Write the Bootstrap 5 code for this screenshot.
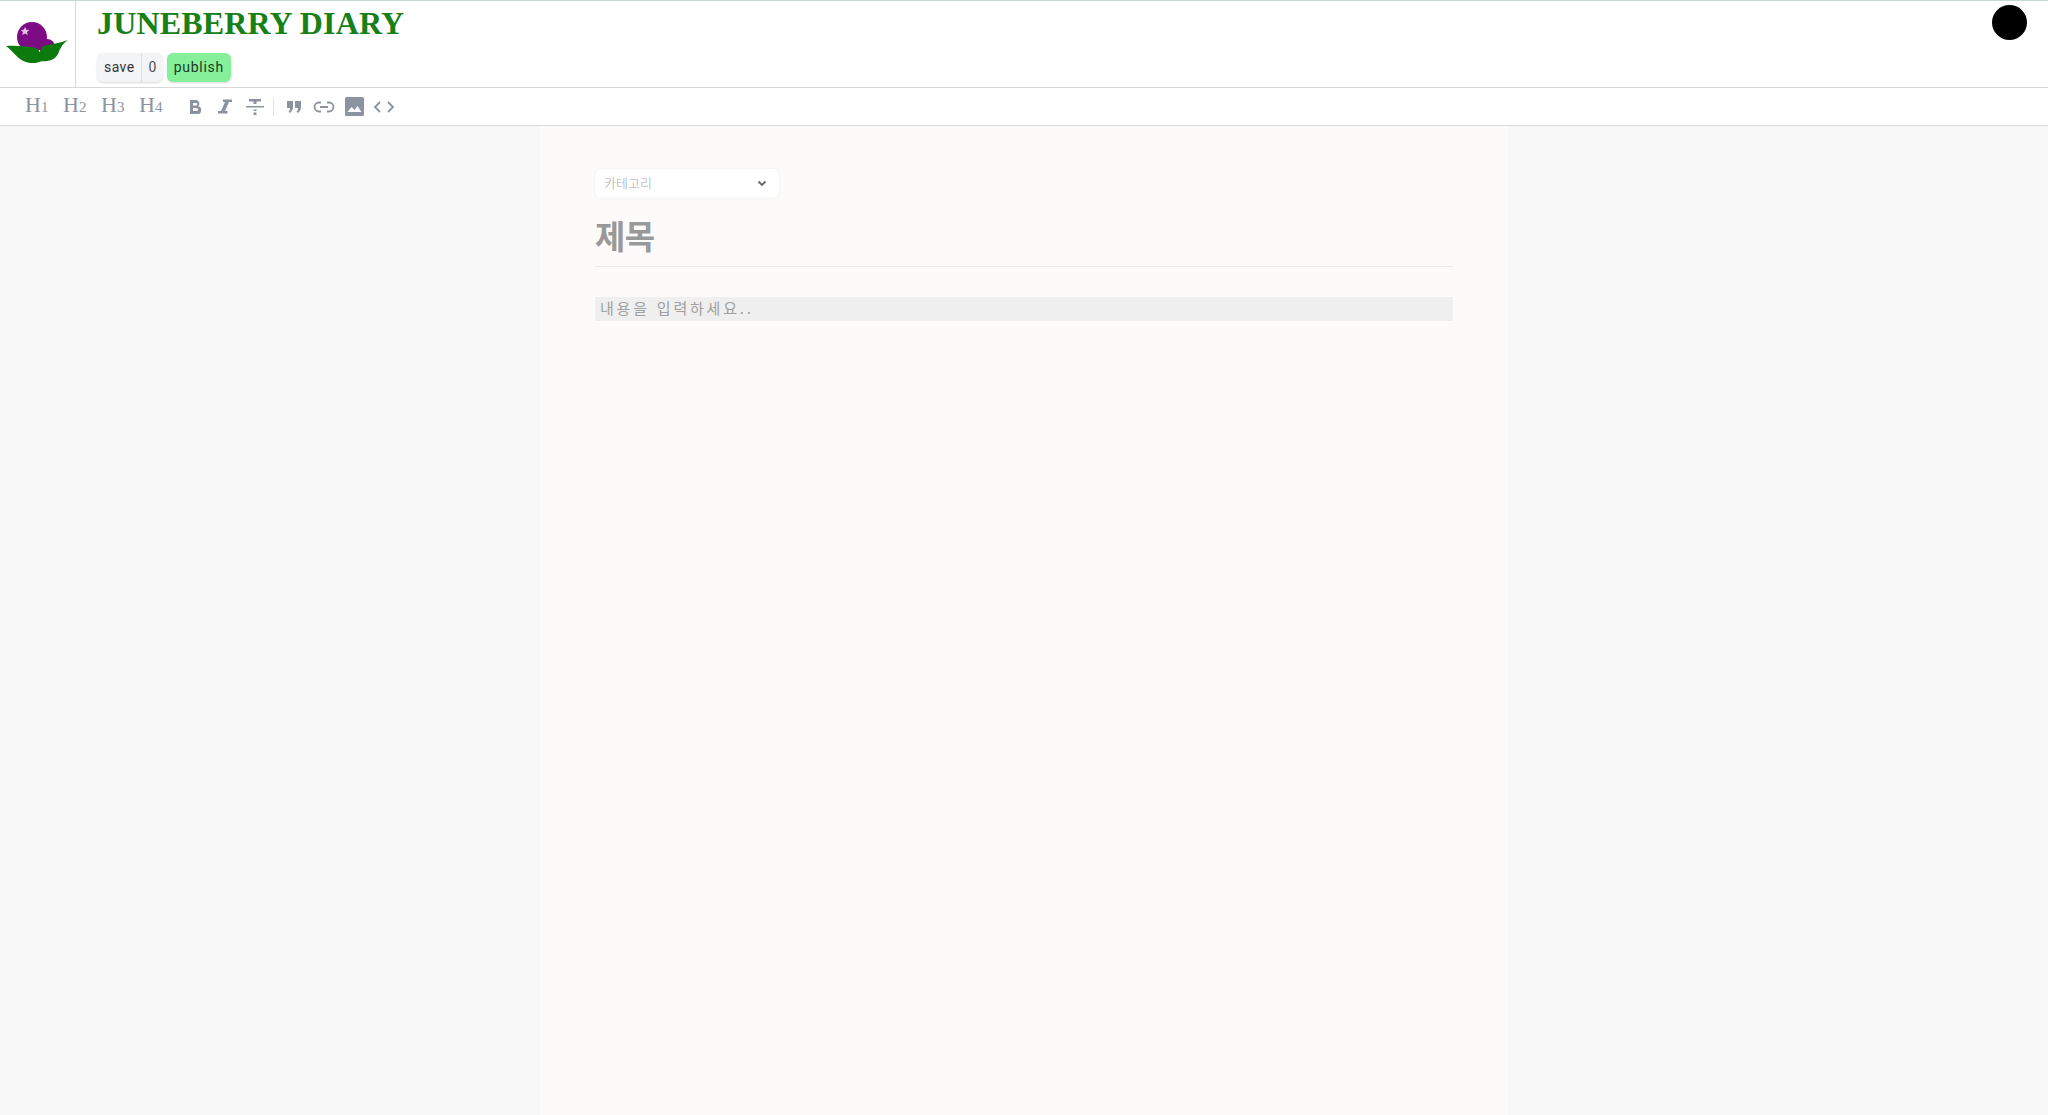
<!DOCTYPE html>
<html lang="ko">
<head>
<meta charset="utf-8">
<title>Juneberry Diary</title>
<link href="https://cdn.jsdelivr.net/npm/bootstrap@5.3.0/dist/css/bootstrap.min.css" rel="stylesheet">
<style>
html,body{height:100%}
body{background:#f8f8f8;font-family:Roboto,"Noto Sans CJK KR",sans-serif;display:flex;flex-direction:column;height:1115px;overflow:hidden}
.topbar{background:#fff;height:88px;border-top:1px solid #c5d9d3;border-bottom:1px solid #d6d9d8;flex:none}
.logo-cell{width:76px;border-right:1px solid #d5d9d8;padding-bottom:6px}
.brand-title{font-family:"Liberation Serif",serif;font-weight:700;font-size:32px;line-height:40px;color:#178017;margin:2px 0 0;letter-spacing:.15px}
.head-main{padding-left:21px}
.act-group{margin-top:10px;gap:4px}
.act-pair{display:flex;background:#f3f4f6;border-radius:6px;box-shadow:0 1px 2px rgba(0,0,0,.15);height:29px;font-size:14px;letter-spacing:.4px;color:#333;line-height:29px}
.act-pair span{padding:0 7px}
.act-pair span+span{border-left:1px solid #dfe0e2;padding:0 6px;color:#555}
.act-pub{background:#86ef9a;border-radius:6px;box-shadow:0 1px 2px rgba(0,0,0,.15);height:29px;line-height:29px;font-size:14px;letter-spacing:.7px;padding:0 7px;color:#1c3a26;border:0}
.avatar-dot{width:35px;height:35px;background:#000;border-radius:50%;margin:4px 21px 0 0}
.toolbar{height:38px;background:#fff;border-bottom:1px solid #d6d9d8;flex:none;padding-left:25px;color:#8b93a1}
.hd-tool{font-family:"Liberation Serif",serif;font-size:22px;line-height:1;width:38px;color:#8b93a1;font-weight:400;padding-bottom:4px}
.hd-tool sub{font-size:15px;vertical-align:baseline;bottom:0}
.tool-ico{width:30px;display:flex;justify-content:center;align-items:center}
.tool-sep{width:1px;height:18px;background:#dfe1e4;margin:0 5px 0 3px}
.tool-row{margin-left:3px}
.sheet-wrap{flex:1;min-height:0}
.sheet{width:968px;background:#fcfbfa;margin:0 auto;padding:43px 55px 0;height:100%}
.cat-select{width:184px;height:29px;background:#fff;border-radius:6px;box-shadow:0 0 3px rgba(0,0,0,.08);font-size:13px;font-weight:300;color:#aaa;padding:0 9px 0 9px;display:flex;align-items:center;justify-content:space-between}
.cat-select svg{margin-right:3px}
.title-ph{font-size:33px;font-weight:700;color:#999;line-height:44px;margin-top:15px;padding-bottom:9px;border-bottom:1px solid #ebebeb;font-family:"Noto Sans CJK KR",sans-serif;letter-spacing:-.5px}
.body-ph{margin-top:30px;background:#efefef;height:24px;line-height:22px;font-size:15px;color:#a0a0a0;padding-left:5px;letter-spacing:2.8px;font-family:"Noto Sans CJK KR",monospace}
</style>
</head>
<body>
<header class="topbar d-flex">
  <div class="logo-cell d-flex align-items-center justify-content-center">
    <svg width="66" height="50" viewBox="0 0 66 50">
      <circle cx="42" cy="31" r="8" fill="#7d0b83"/>
      <circle cx="27" cy="21" r="15" fill="#7d0b83"/>
      <path d="M20 11l1.300 2.800 3 .3-2.300 2 .7 3-2.700-1.600-2.700 1.600.7-3-2.300-2 3-.3z" fill="#e6bfe8"/>
      <path d="M1 30c9-.5 21 0 30 2 4 2 6 8 6 13-4 2-11 3-16 1C12 43 8 35 1 30z" fill="#0d7a0d"/>
      <path d="M63 24c-8 3-17 4-25 6-3 3-4 9-3 15 8 1 15-1 18-7 2-5 4-10 10-14z" fill="#0d7a0d"/>
    </svg>
  </div>
  <div class="head-main flex-grow-1">
    <h1 class="brand-title">JUNEBERRY DIARY</h1>
    <div class="d-flex act-group">
      <div class="act-pair"><span>save</span><span>0</span></div>
      <button class="act-pub" type="button">publish</button>
    </div>
  </div>
  <div class="avatar-dot"></div>
</header>
<nav class="toolbar d-flex align-items-center">
  <div class="hd-tool">H<sub>1</sub></div>
  <div class="hd-tool">H<sub>2</sub></div>
  <div class="hd-tool">H<sub>3</sub></div>
  <div class="hd-tool">H<sub>4</sub></div>
  <div class="d-flex align-items-center tool-row">
    <div class="tool-ico"><svg width="14" height="18" viewBox="0 0 14 16"><path d="M2 1h6a3.500 3.500 0 0 1 2 6.300A3.700 3.700 0 0 1 8.500 15H2zM5 4v2.500h3a1.250 1.250 0 0 0 0-2.500zM5 9v3h3.500a1.500 1.500 0 0 0 0-3z" fill="#8b93a1" fill-rule="evenodd"/></svg></div>
    <div class="tool-ico"><svg width="16" height="17" viewBox="0 0 16 16"><path d="M6 1h9v2.500h-3L8 12.500h2.500V15H1v-2.500h3L8 3.500H6z" fill="#8b93a1"/></svg></div>
    <div class="tool-ico"><svg width="20" height="18" viewBox="0 0 20 18"><path d="M4 1h12v2.500h-4.500V6h-3V3.500H4zM1 8h18v1.500H1zM8.500 11.500h3V13h-3zM8.500 14.500h3V17h-3z" fill="#8b93a1"/></svg></div>
    <div class="tool-sep"></div>
    <div class="tool-ico"><svg width="16" height="14" viewBox="0 0 16 14"><path d="M1 1h6v6c0 3-1.500 5-3.500 6L2.500 11.500C3.500 11 4 10 4 8H1zM9 1h6v6c0 3-1.500 5-3.500 6l-1-1.500c1-.5 1.500-1.500 1.500-3.500H9z" fill="#8b93a1"/></svg></div>
    <div class="tool-ico"><svg width="22" height="12" viewBox="0 0 22 12" fill="none" stroke="#8b93a1" stroke-width="1.800"><path d="M8 1.500H6a4.500 4.500 0 0 0 0 9h2M14 1.500h2a4.500 4.500 0 0 1 0 9h-2M7 6h8"/></svg></div>
    <div class="tool-ico"><svg width="19" height="19" viewBox="0 0 19 19"><rect width="19" height="19" rx="1.500" fill="#8b93a1"/><path d="M2.500 15l4-5 3 3 3-4 4 6z" fill="#fff"/></svg></div>
    <div class="tool-ico"><svg width="22" height="12" viewBox="0 0 22 12" fill="none" stroke="#8b93a1" stroke-width="1.800"><path d="M7 1L2 6l5 5M15 1l5 5-5 5"/></svg></div>
  </div>
</nav>
<main class="sheet-wrap">
  <div class="sheet">
    <div class="cat-select"><span>카테고리</span>
      <svg width="10" height="7" viewBox="0 0 10 7" fill="none" stroke="#666" stroke-width="1.800"><path d="M1.500 1.500L5 5l3.500-3.500"/></svg>
    </div>
    <div class="title-ph">제목</div>
    <div class="body-ph">내용을 입력하세요..</div>
  </div>
</main>
<script src="https://cdn.jsdelivr.net/npm/bootstrap@5.3.0/dist/js/bootstrap.bundle.min.js"></script>
</body>
</html>
